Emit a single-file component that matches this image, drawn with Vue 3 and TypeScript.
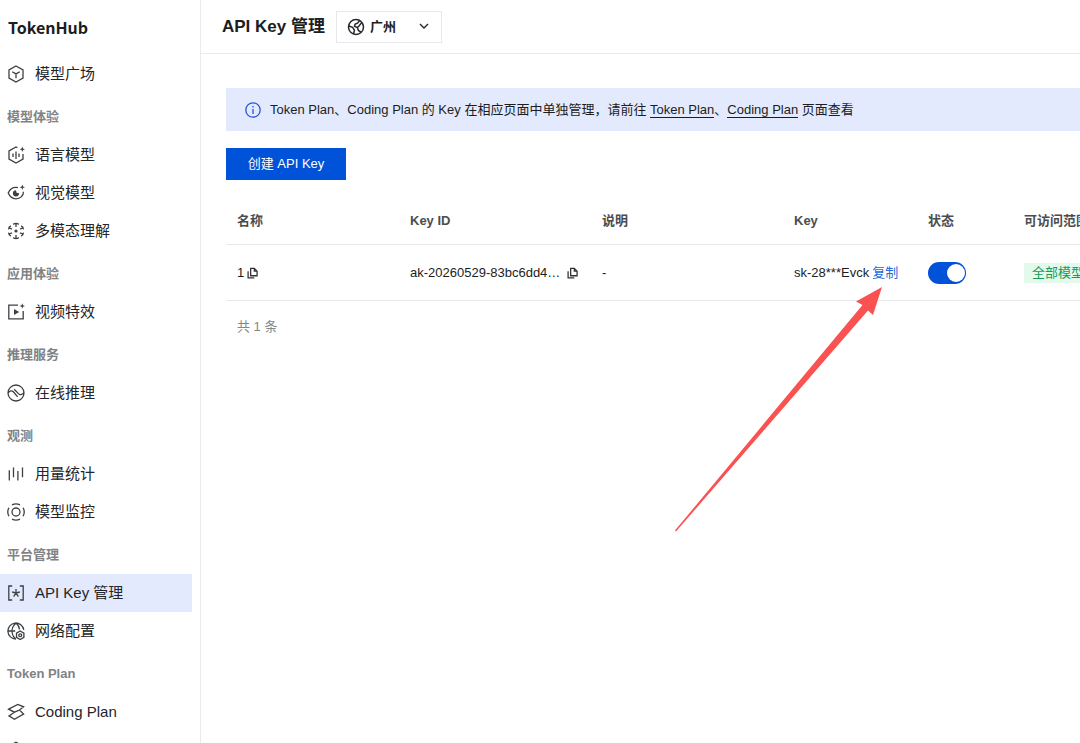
<script setup lang="ts">
import { ref } from 'vue'

type IconName =
  | 'cube' | 'voice' | 'eye' | 'multi' | 'video' | 'infer'
  | 'bars' | 'monitor' | 'key' | 'network' | 'coding' | 'token'

interface NavItem {
  label: string
  icon: IconName
}

interface NavGroup {
  title?: string
  items: NavItem[]
}

const groups: NavGroup[] = [
  { items: [{ label: '模型广场', icon: 'cube' }] },
  {
    title: '模型体验',
    items: [
      { label: '语言模型', icon: 'voice' },
      { label: '视觉模型', icon: 'eye' },
      { label: '多模态理解', icon: 'multi' },
    ],
  },
  { title: '应用体验', items: [{ label: '视频特效', icon: 'video' }] },
  { title: '推理服务', items: [{ label: '在线推理', icon: 'infer' }] },
  {
    title: '观测',
    items: [
      { label: '用量统计', icon: 'bars' },
      { label: '模型监控', icon: 'monitor' },
    ],
  },
  {
    title: '平台管理',
    items: [
      { label: 'API Key 管理', icon: 'key' },
      { label: '网络配置', icon: 'network' },
    ],
  },
  {
    title: 'Token Plan',
    items: [
      { label: 'Coding Plan', icon: 'coding' },
      { label: 'Token Plan', icon: 'token' },
    ],
  },
]

// Line art on an 18 x 18 grid.
const strokes: Record<IconName, string> = {
  cube: 'M9 1 16 5V13L9 17 2 13V5ZM5.2 6.7 9 8.9 12.8 6.7M9 8.9V13.2',
  voice: 'M10.4 1.8 9 1 2 5V13L9 17 16 13V8M6 7.5V11M9 5.6V12.9M12 7.5V11',
  eye: 'M11 3.6C6.4 2.8 2.8 5.4 1.2 9 2.8 12.6 5.6 14.8 9 14.8 13 14.8 16.6 12 16.4 7.8',
  multi: 'M6.2 2.4Q9 .4 11.8 2.4M6.2 15.600Q9 17.600 11.800 15.600M1.600 7.400Q1.500 4.900 3.900 3.800M1.600 10.600Q1.500 13.100 3.900 14.200M16.400 7.400Q16.500 4.900 14.100 3.800M16.400 10.600Q16.500 13.100 14.100 14.200M9 1.500V5M9 13V16.500M2.200 6 5 7.200M2.200 12 5 10.800M15.800 6 13 7.200M15.800 12 13 10.800',
  video: 'M11 2.2H1.8V15.8H16.2V8',
  infer: 'M9 1A8 8 0 1 1 9 17A8 8 0 1 1 9 1ZM1.2 8.8C3 6.4 5 6.200 6.600 8L10.600 12.800M7.200 5.200 11.400 9.600C13 11.200 15 10.800 16.800 8.600',
  bars: 'M2.3 5.2V15.6M6.5 2.5V12.2M10.9 6V15.6M15.5 2.5V12.2',
  monitor: 'M9 5A4 4 0 1 1 9 13A4 4 0 1 1 9 5ZM5 1.9Q9-.2 13 1.9M5 16.1Q9 18.2 13 16.1M1.9 4.8Q-.4 9 1.9 13.2M16.1 4.8Q18.4 9 16.1 13.2',
  key: 'M5.2 2H1.8V16H5.2M12.8 2H16.2V16H12.8M9 5V9M9 9 5.2 8M9 9 12.800 8M9 9 6.600 12.600M9 9 11.400 12.600',
  network: 'M16.8 7.8A8 8 0 1 0 9 17M9 1C3.8 6 3.8 12 8.5 17M9 1Q12 3.5 12.5 7.5M1 9H8.2M13.2 9 16.9 11.1V15.4L13.2 17.5 9.5 15.4V11.1ZM13.2 11.8A1.4 1.4 0 1 1 13.2 14.7A1.4 1.4 0 1 1 13.2 11.8Z',
  coding: 'M1.600 6.200 10.800 1.500 16.600 3.800 12.500 7 7.400 9.200ZM7.400 9.200 2 12.900 7.400 16.300 16.600 11 12.500 7',
  token: 'M9 1.2 15.8 5.1V12.9L9 16.7 2.2 12.9V5.1Z',
}

const fills: Partial<Record<IconName, string>> = {
  voice: 'M15.3.4 16 2.5 18 3.2 16 3.9 15.3 6 14.6 3.9 12.6 3.2 14.6 2.5Z',
  eye: 'M15.3.4 16 2.5 18 3.2 16 3.9 15.3 6 14.6 3.9 12.6 3.2 14.6 2.5ZM9 6.2A3.1 3.1 0 1 0 12.1 9.3L9.600 8.800Z',
  multi: 'M9 7.4A1.6 1.6 0 1 1 9 10.6A1.6 1.6 0 1 1 9 7.4Z',
  video: 'M15.3.2 16 2.3 18 3 16 3.7 15.3 5.8 14.6 3.7 12.6 3 14.6 2.3ZM7 5.9 12.2 9 7 12.1Z',
}

const active = ref('API Key 管理')
const enabled = ref(true)
const region = ref('广州')
</script>

<template>
  <div class="app">
    <aside class="sidebar">
      <h2 class="brand">TokenHub</h2>
      <nav>
        <section v-for="(group, i) in groups" :key="i">
          <h3 v-if="group.title" class="group-title">{{ group.title }}</h3>
          <a
            v-for="item in group.items"
            :key="item.label"
            href="#"
            class="nav-item"
            :class="{ active: item.label === active }"
            @click.prevent="active = item.label"
          >
            <svg class="nav-icon" viewBox="0 0 18 18" aria-hidden="true">
              <path class="line" :d="strokes[item.icon]" />
              <path v-if="fills[item.icon]" class="solid" :d="fills[item.icon]" />
            </svg>
            <span>{{ item.label }}</span>
          </a>
        </section>
      </nav>
    </aside>

    <main class="main">
      <header class="topbar">
        <h1>API Key 管理</h1>
        <div class="region">
          <svg class="globe" viewBox="0 0 18 18" aria-hidden="true">
            <circle cx="9" cy="9" r="7.5" />
            <path d="M1.800 8 5.600 9.400 7.400 12.200 6.600 16M12.600 2.600 10.800 5 8 6.200 7.600 8.400 10.400 9.600 11.400 12.400 14 14.200M14.800 4.600 12.400 7.400 10.400 9.600" />
          </svg>
          <select v-model="region" aria-label="地域">
            <option>广州</option>
          </select>
          <svg class="chevron" viewBox="0 0 10 10" aria-hidden="true"><path d="M1 3 5 7 9 3" /></svg>
        </div>
      </header>

      <div class="content">
        <div class="notice" role="note">
          <svg class="info" viewBox="0 0 16 16" aria-hidden="true">
            <circle cx="8" cy="8" r="7.2" />
            <path d="M8 7V12M8 4V5.6" />
          </svg>
          <p>Token Plan、Coding Plan 的 Key 在相应页面中单独管理，请前往 <a href="#">Token Plan</a>、<a href="#">Coding Plan</a> 页面查看</p>
        </div>

        <button type="button" class="create">创建 API Key</button>

        <table>
          <colgroup>
            <col class="c-name" /><col class="c-id" /><col class="c-desc" />
            <col class="c-key" /><col class="c-state" /><col class="c-scope" />
          </colgroup>
          <thead>
            <tr>
              <th>名称</th><th>Key ID</th><th>说明</th><th>Key</th><th>状态</th><th>可访问范围</th>
            </tr>
          </thead>
          <tbody>
            <tr>
              <td>
                <div class="cell">
                  <span>1</span>
                  <button type="button" class="copy" aria-label="复制名称">
                    <svg viewBox="0 0 12 12"><path d="M4 1H8L11 4V9H4ZM8 1V4H11M1.2 4V11.2H8" /></svg>
                  </button>
                </div>
              </td>
              <td>
                <div class="cell spread">
                  <span>ak-20260529-83bc6dd4…</span>
                  <button type="button" class="copy" aria-label="复制 Key ID">
                    <svg viewBox="0 0 12 12"><path d="M4 1H8L11 4V9H4ZM8 1V4H11M1.2 4V11.2H8" /></svg>
                  </button>
                </div>
              </td>
              <td>-</td>
              <td>
                <div class="cell key-cell">
                  <span>sk-28***Evck</span>
                  <a href="#" class="copy-link">复制</a>
                  <svg class="pointer" viewBox="0 0 208 245" aria-hidden="true">
                    <path d="M207 0 181 14.500 187.500 18 0 243.500 1 244.500 193 23.500 198 28Z" />
                  </svg>
                </div>
              </td>
              <td>
                <input v-model="enabled" type="checkbox" role="switch" class="switch" aria-label="状态" />
              </td>
              <td><span class="tag">全部模型</span></td>
            </tr>
          </tbody>
        </table>
        <p class="total">共 1 条</p>
      </div>
    </main>
  </div>
</template>

<style>
body {
  margin: 0;
  overflow: hidden;
}
</style>

<style scoped>
.app {
  display: flex;
  height: 100vh;
  overflow: hidden;
  background: #fff;
  color: #1b1d20;
  font-family: "Liberation Sans", "Noto Sans CJK SC", sans-serif;
  font-size: 13px;
  line-height: 20px;
}

h1, h2, h3, p {
  margin: 0;
}

.sidebar {
  flex: none;
  width: 200px;
  border-right: 1px solid #e9ebee;
  overflow: hidden;
}

.brand {
  padding: 0 8px 1px;
  font-family: "Noto Sans CJK SC", sans-serif;
  font-size: 16px;
  line-height: 54px;
}

.group-title {
  padding: 4px 7px 0;
  font-size: 13px;
  line-height: 39px;
  color: #808285;
}

.nav-item {
  display: flex;
  align-items: center;
  gap: 10px;
  height: 38px;
  margin-right: 8px;
  padding-left: 7px;
  color: #232529;
  font-size: 15px;
  text-decoration: none;
}

.nav-item.active {
  background: #e3eafe;
}

.nav-icon {
  width: 18px;
  height: 18px;
}

.line {
  fill: none;
  stroke: #3d4043;
  stroke-width: 1.3;
}

.solid {
  fill: #3d4043;
}

.main {
  flex: 1;
  min-width: 0;
  overflow: hidden;
}

.topbar {
  display: flex;
  align-items: center;
  gap: 11px;
  height: 53px;
  padding-left: 21px;
  border-bottom: 1px solid #e9ebee;
}

h1 {
  font-size: 17px;
  line-height: 26px;
}

.region {
  position: relative;
}

.region select {
  display: block;
  appearance: none;
  width: 106px;
  height: 32px;
  padding: 0 28px 0 33px;
  border: 1px solid #e6e8eb;
  border-radius: 0;
  background: #fff;
  color: #1b1d20;
  font: bold 13px "Liberation Sans", "Noto Sans CJK SC", sans-serif;
}

.globe, .chevron {
  position: absolute;
  fill: none;
  stroke: #26282b;
  pointer-events: none;
}

.globe {
  top: 7px;
  left: 11px;
  width: 18px;
  height: 18px;
  stroke-width: 1.5;
}

.chevron {
  top: 10px;
  right: 13px;
  width: 10px;
  height: 10px;
  stroke-width: 1.4;
}

.content {
  padding: 34px 0 0 25px;
}

.notice {
  display: flex;
  align-items: center;
  gap: 9px;
  height: 43px;
  padding-left: 19px;
  background: #e3eafe;
  white-space: nowrap;
}

.notice a {
  color: inherit;
  text-decoration: none;
  border-bottom: 1px solid #1b1d20;
}

.info {
  width: 16px;
  height: 16px;
  fill: none;
  stroke: #2056d6;
  stroke-width: 1.3;
}

.create {
  display: block;
  width: 120px;
  height: 32px;
  margin: 17px 0 16px;
  padding: 0;
  border: 0;
  background: #0052d9;
  color: #fff;
  font: inherit;
}

table {
  width: 960px;
  table-layout: fixed;
  border-collapse: collapse;
  white-space: nowrap;
}

.c-name { width: 173px; }
.c-id { width: 192px; }
.c-desc { width: 192px; }
.c-key { width: 134px; }
.c-state { width: 96px; }

th, td {
  padding: 0 11px;
  border-bottom: 1px solid #e6e8eb;
  text-align: left;
}

th {
  height: 47px;
  padding-top: 1px;
  color: #4a4d50;
}

td {
  height: 55px;
}

.cell {
  display: flex;
  align-items: center;
  gap: 3px;
}

.spread {
  gap: 7px;
}

.copy {
  display: flex;
  padding: 0;
  border: 0;
  background: none;
}

.copy svg {
  width: 11px;
  height: 12px;
  fill: none;
  stroke: #303236;
  stroke-width: 1.4;
}

.copy-link {
  color: #2468dc;
  text-decoration: none;
}

.key-cell {
  position: relative;
}

/* Callout arrow that points at the copy link. */
.pointer {
  position: absolute;
  top: 24px;
  right: 23px;
  width: 208px;
  height: 245px;
  fill: #fa5151;
  pointer-events: none;
}

.switch {
  appearance: none;
  display: flex;
  align-items: center;
  justify-content: flex-end;
  width: 38px;
  height: 22px;
  margin: 0;
  padding: 0 1px;
  border-radius: 11px;
  background: #b9bec7;
}

.switch:checked {
  background: #0052d9;
}

.switch::before {
  content: "";
  width: 18px;
  height: 18px;
  border-radius: 50%;
  background: #fff;
}

.tag {
  display: inline-block;
  padding: 0 8px;
  background: #e3f9ec;
  color: #1a9a59;
}

.total {
  padding: 16px 11px;
  color: #85878a;
}
</style>
